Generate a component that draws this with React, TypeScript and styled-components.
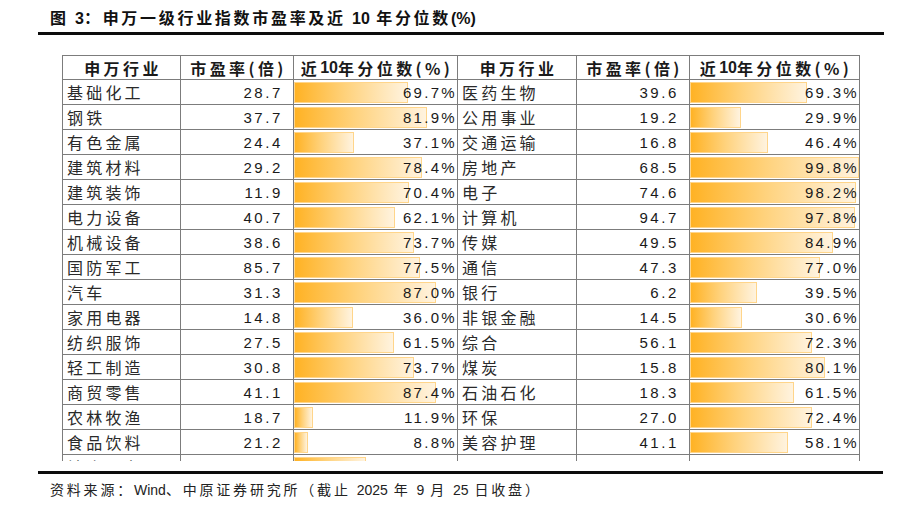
import styled, { createGlobalStyle } from 'styled-components'
import { FC } from 'react'

const cjk = '"Noto Sans CJK SC", "Liberation Sans", sans-serif'
const latin = '"Liberation Sans", "Noto Sans CJK SC", sans-serif'
const gridColor = '#7c7c7c'

const GlobalStyle = createGlobalStyle`
  html, body {
    margin: 0;
    padding: 0;
    background: #ffffff;
  }
  body {
    font-family: ${cjk};
    color: #1e1e1e;
  }
`

interface Row {
  name: string
  pe?: string
  pct: number
}

const leftRows: Row[] = [
  { name: '基础化工', pe: '28.7', pct: 69.7 },
  { name: '钢铁', pe: '37.7', pct: 81.9 },
  { name: '有色金属', pe: '24.4', pct: 37.1 },
  { name: '建筑材料', pe: '29.2', pct: 78.4 },
  { name: '建筑装饰', pe: '11.9', pct: 70.4 },
  { name: '电力设备', pe: '40.7', pct: 62.1 },
  { name: '机械设备', pe: '38.6', pct: 73.7 },
  { name: '国防军工', pe: '85.7', pct: 77.5 },
  { name: '汽车', pe: '31.3', pct: 87.0 },
  { name: '家用电器', pe: '14.8', pct: 36.0 },
  { name: '纺织服饰', pe: '27.5', pct: 61.5 },
  { name: '轻工制造', pe: '30.8', pct: 73.7 },
  { name: '商贸零售', pe: '41.1', pct: 87.4 },
  { name: '农林牧渔', pe: '18.7', pct: 11.9 },
  { name: '食品饮料', pe: '21.2', pct: 8.8 },
  // only the top edge of this row shows under the clip
  { name: '社会服务', pct: 44.0 },
]

const rightRows: (Row | null)[] = [
  { name: '医药生物', pe: '39.6', pct: 69.3 },
  { name: '公用事业', pe: '19.2', pct: 29.9 },
  { name: '交通运输', pe: '16.8', pct: 46.4 },
  { name: '房地产', pe: '68.5', pct: 99.8 },
  { name: '电子', pe: '74.6', pct: 98.2 },
  { name: '计算机', pe: '94.7', pct: 97.8 },
  { name: '传媒', pe: '49.5', pct: 84.9 },
  { name: '通信', pe: '47.3', pct: 77.0 },
  { name: '银行', pe: '6.2', pct: 39.5 },
  { name: '非银金融', pe: '14.5', pct: 30.6 },
  { name: '综合', pe: '56.1', pct: 72.3 },
  { name: '煤炭', pe: '15.8', pct: 80.1 },
  { name: '石油石化', pe: '18.3', pct: 61.5 },
  { name: '环保', pe: '27.0', pct: 72.4 },
  { name: '美容护理', pe: '41.1', pct: 58.1 },
  null,
]

const Page = styled.div`
  width: 923px;
  height: 507px;
  overflow: hidden;
`

const Title = styled.div`
  padding: 6px 0 0 50px;
  height: 26px;
  line-height: 22px;
  font-family: ${cjk};
  font-size: 16px;
  font-weight: 700;
  letter-spacing: 2.7px;
  color: #111;
  white-space: nowrap;
`

const Latin = styled.span<{ $size?: number }>`
  font-family: ${latin};
  letter-spacing: 0;
  ${({ $size }) => $size && `font-size: ${$size}px;`}
`

const Rule = styled.div<{ $width: number; $top?: number }>`
  margin-left: 38px;
  margin-top: ${({ $top = 0 }) => $top}px;
  width: ${({ $width }) => $width}px;
  height: 3px;
  background: #0c0c0c;
`

const TableClip = styled.div`
  margin: 20px 0 0 62px;
  width: 798px;
  height: 406px;
  overflow: hidden;
`

const Table = styled.div`
  display: grid;
  grid-template-columns: 117px 112px 163px 118px 112px 169px;
  grid-auto-rows: 24px;
  grid-template-rows: 23px;
  gap: 1px;
  padding: 1px;
  background: ${gridColor};
  width: max-content;
`

const Cell = styled.div`
  background: #ffffff;
  display: flex;
  align-items: center;
  overflow: hidden;
  white-space: nowrap;
`

const HeadCell = styled(Cell)`
  justify-content: center;
  padding-left: 3px;
  font-family: ${cjk};
  font-size: 16px;
  font-weight: 700;
  letter-spacing: 3.4px;
  color: #1a1a1a;
`

const NameCell = styled(Cell)`
  padding-left: 4px;
  font-size: 16px;
  letter-spacing: 3.2px;
  color: #2a2a2a;
`

const NumCell = styled(Cell)`
  justify-content: flex-end;
  padding-right: 10px;
  font-family: ${latin};
  font-size: 15px;
  letter-spacing: 2.6px;
  color: #1a1a1a;
`

const PctCell = styled(NumCell)`
  position: relative;
  padding-right: 0;
  letter-spacing: 2.3px;
`

const Bar = styled.div`
  position: absolute;
  left: 0;
  top: 2px;
  bottom: 1px;
  box-sizing: border-box;
  border: 1px solid #ffd58a;
  background: linear-gradient(to right, #ffb224 0%, #ffd27c 45%, #fff3df 100%);
`

const PctText = styled.span`
  position: relative;
`

const Source = styled.div`
  padding-left: 50px;
  line-height: 30px;
  font-family: ${cjk};
  font-size: 14px;
  letter-spacing: 2.8px;
  color: #222;
  white-space: nowrap;
`

const RowCells: FC<{ row: Row | null }> = ({ row }) => {
  if (!row) {
    return (
      <>
        <NameCell />
        <NumCell />
        <PctCell />
      </>
    )
  }
  return (
    <>
      <NameCell>{row.name}</NameCell>
      <NumCell>{row.pe}</NumCell>
      <PctCell>
        <Bar style={{ width: `${row.pct}%` }} />
        {row.pe && <PctText>{row.pct.toFixed(1)}%</PctText>}
      </PctCell>
    </>
  )
}

const Header = () => (
  <>
    <HeadCell>申万行业</HeadCell>
    <HeadCell>市盈率(倍)</HeadCell>
    <HeadCell>
      近<Latin>10</Latin>年分位数(%)
    </HeadCell>
  </>
)

export default function App() {
  return (
    <Page>
      <GlobalStyle />
      <Title>
        图 <Latin>3</Latin>：申万一级行业指数市盈率及近 <Latin>10</Latin> 年分位数<Latin>(%)</Latin>
      </Title>
      <Rule $width={846} />
      <TableClip>
        <Table>
          <Header />
          <Header />
          {leftRows.map((row, i) => (
            <>
              <RowCells key={`l${i}`} row={row} />
              <RowCells key={`r${i}`} row={rightRows[i]} />
            </>
          ))}
        </Table>
      </TableClip>
      <Rule $width={845} $top={10} />
      <Source>
        资料来源：<Latin $size={14}>Wind</Latin>、中原证券研究所（截止 <Latin $size={14}>2025</Latin> 年{' '}
        <Latin $size={14}>9</Latin> 月 <Latin $size={14}>25</Latin> 日收盘）
      </Source>
    </Page>
  )
}
